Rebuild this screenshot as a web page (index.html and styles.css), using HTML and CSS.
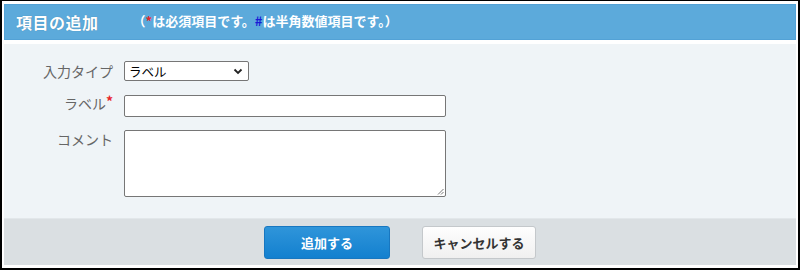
FILE: index.html
```html
<!DOCTYPE html>
<html lang="ja">
<head>
<meta charset="utf-8">
<link rel="stylesheet" href="styles.css">
</head>
<body>
<div class="frame">
  <div class="header">
    <h1 class="title">項目の追加</h1>
    <span class="note">（<span class="req">*</span>は必須項目です。<span class="num">#</span>は半角数値項目です。）</span>
  </div>
  <div class="panel">
    <div class="form">
      <div class="row">
        <label class="label">入力タイプ</label>
        <div class="select"><span>ラベル</span><svg class="chev" width="10" height="7" viewBox="0 0 10 7"><path d="M1.5 1.5 L5 5 L8.5 1.5" fill="none" stroke="#222" stroke-width="1.8"/></svg></div>
      </div>
      <div class="row">
        <label class="label">ラベル<span class="star">*</span></label>
        <div class="input"></div>
      </div>
      <div class="row">
        <label class="label">コメント</label>
        <div class="textarea"><svg class="grip" width="7" height="7" viewBox="0 0 7 7"><path d="M6.5 1 L1 6.5 M6.5 4 L4 6.5" stroke="#777" stroke-width="1"/></svg></div>
      </div>
    </div>
  </div>
  <div class="footer">
    <button class="btn primary">追加する</button>
    <button class="btn secondary">キャンセルする</button>
  </div>
</div>
</body>
</html>
```

FILE: styles.css
```css
* { box-sizing: border-box; }
html, body { margin: 0; padding: 0; background: #fff; }
body {
  font-family: "Noto Sans CJK JP", "Noto Sans", sans-serif;
  width: 800px;
  height: 271px;
}
.frame {
  width: 800px;
  height: 270px;
  border: 2px solid #000;
  border-top-width: 1px;
  padding: 3px 2px 3px 2px;
  display: flex;
  flex-direction: column;
}
.header {
  height: 36px;
  background: #5caadb;
  border: 1px solid #53a2d6;
  display: flex;
  align-items: center;
  padding-left: 11px;
  flex-shrink: 0;
}
.title {
  margin: 0;
  font-size: 16px;
  font-weight: bold;
  color: #fff;
  letter-spacing: 0.5px;
  text-shadow: 0 0 1px rgba(0,0,0,0.25);
}
.note {
  margin-left: 34px;
  font-size: 13px;
  font-weight: bold;
  color: #fff;
  margin-top: -3px;
}
.req { color: #e8262b; }
.num { color: #1a1ad6; }
.panel {
  margin-top: 4px;
  background: #eff4f7;
  height: 174px;
  flex-shrink: 0;
  padding-top: 18px;
}
.form {
  display: flex;
  flex-direction: column;
  gap: 13px;
}
.row {
  display: flex;
  align-items: flex-start;
}
.label {
  width: 109px;
  text-align: right;
  font-size: 14px;
  color: #666;
  margin-right: 11px;
  line-height: 18px;
}
.star { color: #e8262b; font-size: 14px; font-weight: bold; vertical-align: 2px; line-height: 1; }
.select {
  width: 125px;
  height: 20px;
  margin-top: -1px;
  background: #fff;
  border: 1px solid #767676;
  border-radius: 2px;
  display: flex;
  align-items: center;
  justify-content: space-between;
  padding: 0 5px 0 4px;
  font-size: 12.5px;
  color: #000;
}
.input {
  width: 322px;
  height: 22px;
  margin-top: 1px;
  background: #fff;
  border: 1px solid #767676;
  border-radius: 2px;
}
.textarea {
  width: 322px;
  height: 67px;
  background: #fff;
  border: 1px solid #767676;
  border-radius: 2px;
  position: relative;
}
.grip { position: absolute; right: 1px; bottom: 1px; }
.footer {
  margin-top: 0;
  background: #dadfe2;
  border-top: 1px solid #e2e7ea;
  height: 47px;
  display: flex;
  justify-content: center;
  align-items: center;
  gap: 32px;
}
.btn {
  font-family: "Noto Sans CJK JP", "Noto Sans", sans-serif;
  font-size: 13px;
  font-weight: bold;
  height: 33px;
  border-radius: 3px;
  cursor: pointer;
}
.primary {
  width: 126px;
  color: #fff;
  background: linear-gradient(#2f95da, #1380cf);
  border: 1px solid #1877c0;
}
.secondary {
  width: 114px;
  color: #333;
  background: linear-gradient(#fefefe, #f0f0f0);
  border: 1px solid #c4c8cb;
}
```
